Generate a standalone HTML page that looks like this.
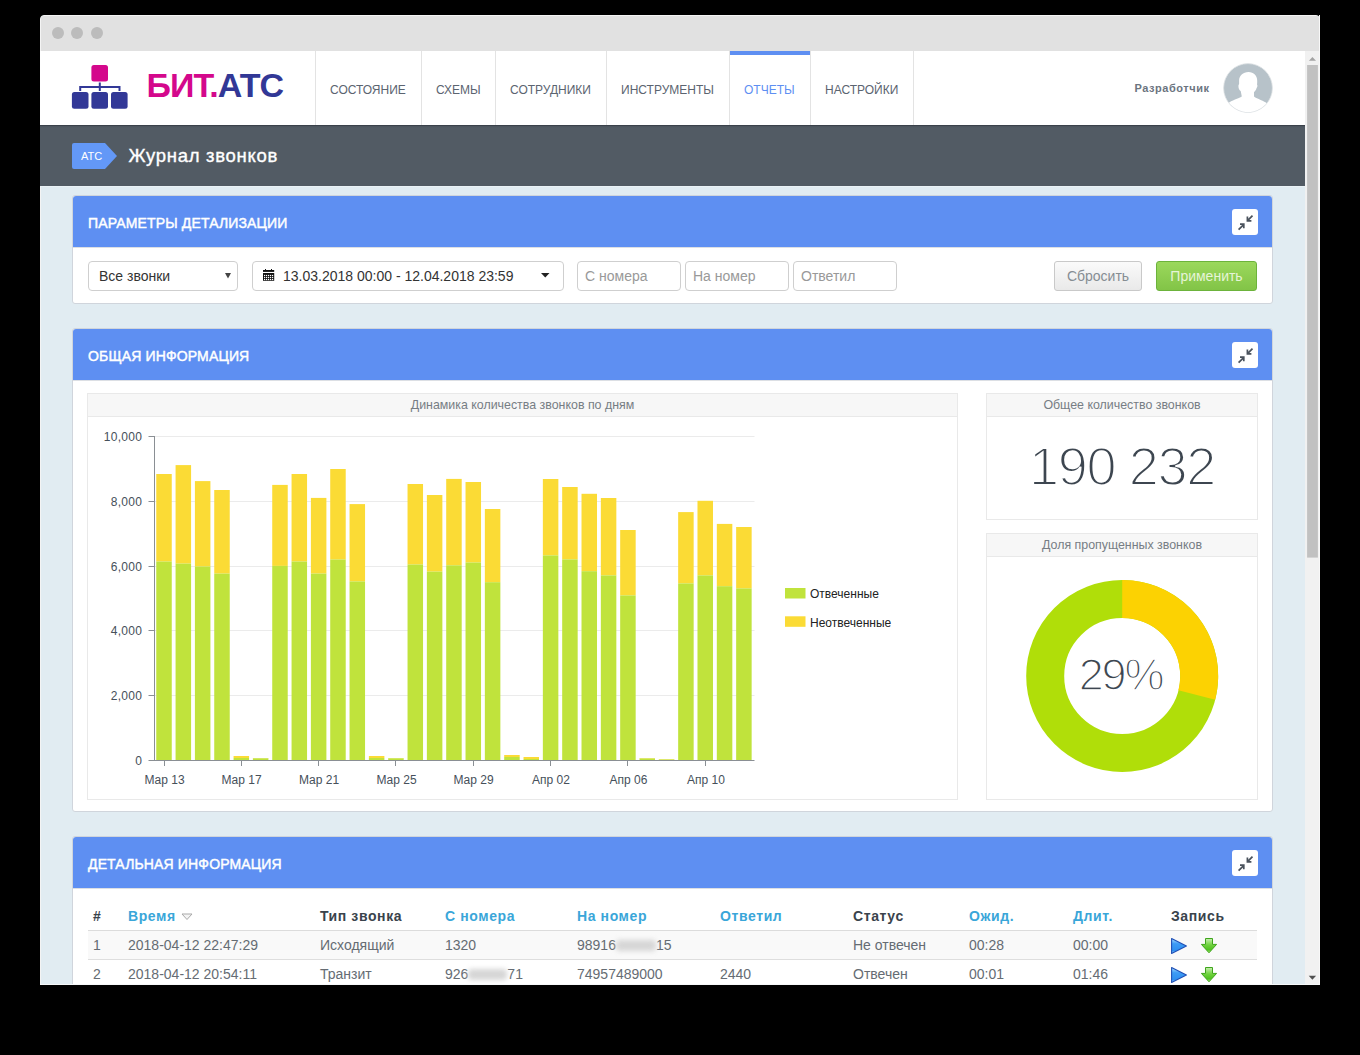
<!DOCTYPE html>
<html><head><meta charset="utf-8">
<style>
*{box-sizing:border-box;margin:0;padding:0}
html,body{width:1360px;height:1055px;overflow:hidden;background:#000;font-family:"Liberation Sans",sans-serif}
.abs{position:absolute}
#win{position:absolute;left:40px;top:15px;width:1280px;height:970px;background:#e1ecf2;border-radius:4px 4px 0 0;overflow:hidden;border:1px solid #f4f4f4}
#titlebar{position:absolute;left:0;top:0;width:1280px;height:36px;background:#e1e1e1}
.dot{position:absolute;top:11px;width:12px;height:12px;border-radius:50%;background:#bcbcbc}
#hdr{position:absolute;left:40px;top:51px;width:1265px;height:74px;background:#fff}
.navsep{position:absolute;top:51px;width:1px;height:74px;background:#e3e3e3}
.nav{position:absolute;top:84px;font-size:12px;color:#5b6470;line-height:12px;white-space:nowrap}
#dark{position:absolute;left:40px;top:125px;width:1265px;height:61px;background:linear-gradient(#3a414a 0,#3a414a 1px,#4b535c 1px,#4f5861 2px,#525b64 3px)}
.panel{position:absolute;left:72px;width:1201px;background:#fff;border:1px solid #d0d5dc;border-radius:3px}
.phead{position:absolute;left:0;top:0;width:1199px;height:52px;background:#5e8ff2;border-radius:3px 3px 0 0;border-bottom:1px solid #dcdfe4}
.ptitle{position:absolute;left:15px;top:20px;color:#fff;font-size:14px;font-weight:normal;-webkit-text-stroke:0.45px #fff;letter-spacing:0.15px;line-height:14px;white-space:nowrap}
.pbtn{position:absolute;left:1159px;top:13px;width:26px;height:26px}
.inp{position:absolute;height:30px;border:1px solid #cfcfcf;border-radius:4px;background:#fff;font-size:14px;color:#999;line-height:28px;padding-left:7px;white-space:nowrap}
.box{position:absolute;background:#fff;border:1px solid #e9e9e9}
.bhead{position:absolute;left:0;top:0;width:100%;height:23px;background:#f7f7f7;border-bottom:1px solid #e9e9e9;text-align:center;font-size:12.4px;color:#767d84;line-height:22px}
.th{position:absolute;top:908px;font-size:14px;font-weight:bold;letter-spacing:0.6px;color:#3a434c;line-height:16px;white-space:nowrap}
.th.b{color:#3aa6d9}
.td{position:absolute;font-size:14px;color:#656c73;line-height:16px;white-space:nowrap}
.blur{display:inline-block;height:11px;vertical-align:-1px;background:#d6d6d6;filter:blur(2.5px);border-radius:4px}
#sb{position:absolute;left:1305px;top:51px;width:14px;height:934px;background:#f1f1f1}
</style></head><body>
<div id="win">
  <div id="titlebar"></div>
  <div class="dot" style="left:11px"></div>
  <div class="dot" style="left:30px"></div>
  <div class="dot" style="left:50px"></div>
</div>
<div id="hdr"></div>
<div class="navsep" style="left:315px"></div>
<div class="navsep" style="left:421px"></div>
<div class="navsep" style="left:495px"></div>
<div class="navsep" style="left:606px"></div>
<div class="navsep" style="left:729px"></div>
<div class="navsep" style="left:810px"></div>
<div class="navsep" style="left:913px"></div>
<div class="abs" style="left:730px;top:51px;width:80px;height:4px;background:#5e8ff2"></div>
<div class="nav" style="left:330px">СОСТОЯНИЕ</div>
<div class="nav" style="left:436px">СХЕМЫ</div>
<div class="nav" style="left:510px">СОТРУДНИКИ</div>
<div class="nav" style="left:621px">ИНСТРУМЕНТЫ</div>
<div class="nav" style="left:744px;color:#5e8ff2">ОТЧЕТЫ</div>
<div class="nav" style="left:825px">НАСТРОЙКИ</div>

<!-- logo -->
<svg class="abs" style="left:0;top:0" width="300" height="125" viewBox="0 0 300 125">
  <rect x="91.4" y="65" width="16.6" height="16.6" rx="2.5" fill="#d4088c"/>
  <rect x="71.9" y="92.1" width="16.6" height="16.6" rx="2.5" fill="#323897"/>
  <rect x="91.4" y="92.1" width="16.6" height="16.6" rx="2.5" fill="#323897"/>
  <rect x="111" y="92.1" width="16.6" height="16.6" rx="2.5" fill="#323897"/>
  <path d="M99.8 82.6V91 M80.2 91V87 H119.5 V91" stroke="#323897" stroke-width="2" fill="none"/>
  <text x="146.5" y="97.2" font-family="Liberation Sans" font-weight="bold" font-size="34" letter-spacing="-1" fill="#d4088c">БИТ.<tspan fill="#323896">АТС</tspan></text>
</svg>
<div class="abs" style="left:1134.5px;top:83px;font-size:11px;font-weight:bold;letter-spacing:0.55px;color:#6b7480;line-height:11px">Разработчик</div>
<svg class="abs" style="left:1222px;top:62px" width="52" height="52" viewBox="0 0 52 52">
  <defs><clipPath id="cav"><circle cx="26" cy="26" r="24.2"/></clipPath></defs>
  <circle cx="26" cy="26" r="24.4" fill="#b7c2c9" stroke="#dfe3e6" stroke-width="0.8"/>
  <g clip-path="url(#cav)" fill="#fff">
    <path d="M26.5 9.9C21 9.9 17.1 13.5 17.1 18.5V22.2C16.2 22.6 16.2 25.5 17.2 27.4C17.6 28.3 18.2 28.8 18.7 29L19.8 34.6C17 36.6 9 38.6 6.3 41.2L-2 54H54L45.2 41.6C42.4 39 35 37 32 34.6V30C33 29.4 34 28 34.6 26C35.6 25.2 35.6 23 35 22.4C35.3 21 35.2 19.5 35.2 18.5C35.2 13.5 31.8 9.9 26.5 9.9Z"/>
  </g>
</svg>

<div id="dark"></div>
<div class="abs" style="left:40px;top:186px;width:1265px;height:1px;background:#eaf2f6"></div>
<svg class="abs" style="left:72px;top:143px" width="46" height="26" viewBox="0 0 46 26">
  <path d="M2 0H33L45 13L33 26H2A2 2 0 0 1 0 24V2A2 2 0 0 1 2 0Z" fill="#6398f7"/>
  <text x="9" y="17" font-family="Liberation Sans" font-size="11" fill="#fff">ATC</text>
</svg>
<div class="abs" style="left:128.5px;top:147px;font-size:18.5px;letter-spacing:0.7px;-webkit-text-stroke:0.35px #fff;color:#fff;line-height:18px;white-space:nowrap">Журнал звонков</div>

<!-- panel 1 -->
<div class="panel" style="top:195px;height:109px">
  <div class="phead"></div>
  <div class="ptitle">ПАРАМЕТРЫ ДЕТАЛИЗАЦИИ</div>
  <svg class="pbtn" width="26" height="26" viewBox="0 0 26 26"><rect width="26" height="26" rx="3" fill="#fff"/><g stroke="#4a525c" stroke-width="1.7" fill="none"><path d="M20.5 6.6L15.8 11.4M15.4 7.6V11.8H19.4"/><path d="M6.6 20.6L11.4 15.8M8 15.2H11.8V19.2"/></g></svg>
</div>
<div class="inp" style="left:88px;top:261px;width:150px;color:#333;padding-left:10px">Все звонки</div>
<div class="inp" style="left:252px;top:261px;width:312px;color:#333;padding-left:30px">13.03.2018 00:00 - 12.04.2018 23:59</div>
<svg class="abs" style="left:225px;top:273px" width="6" height="6" viewBox="0 0 6 6"><path d="M0 0H6L3 5.6Z" fill="#444"/></svg>
<svg class="abs" style="left:263px;top:269px" width="12" height="12" viewBox="0 0 12 12">
<rect x="0" y="1" width="11.2" height="1.9" fill="#111"/><rect x="2" y="0" width="1" height="2" fill="#111"/><rect x="8" y="0" width="1" height="2" fill="#111"/>
<rect x="0" y="4" width="11.2" height="7.8" fill="#111"/>
<g fill="#fff"><rect x="1" y="5.9" width="1.2" height="1.2"/><rect x="3" y="5.9" width="1.2" height="1.2"/><rect x="5" y="5.9" width="1.2" height="1.2"/><rect x="7" y="5.9" width="1.2" height="1.2"/><rect x="9" y="5.9" width="1.2" height="1.2"/>
<rect x="1" y="7.9" width="1.2" height="1.2"/><rect x="3" y="7.9" width="1.2" height="1.2"/><rect x="5" y="7.9" width="1.2" height="1.2"/><rect x="7" y="7.9" width="1.2" height="1.2"/><rect x="9" y="7.9" width="1.2" height="1.2"/>
<rect x="1" y="9.9" width="1.2" height="1.2"/><rect x="3" y="9.9" width="1.2" height="1.2"/><rect x="5" y="9.9" width="1.2" height="1.2"/><rect x="7" y="9.9" width="1.2" height="1.2"/><rect x="9" y="9.9" width="1.2" height="1.2"/></g></svg>
<svg class="abs" style="left:541px;top:273px" width="9" height="5" viewBox="0 0 9 5"><path d="M0 0H8.5L4.25 4.5Z" fill="#222"/></svg>
<div class="inp" style="left:577px;top:261px;width:104px">С номера</div>
<div class="inp" style="left:685px;top:261px;width:104px">На номер</div>
<div class="inp" style="left:793px;top:261px;width:104px">Ответил</div>
<div class="abs" style="left:1054px;top:261px;width:88px;height:30px;border:1px solid #c9c9c9;border-radius:3px;background:linear-gradient(#fafafa,#e9e9e9);font-size:14px;color:#868d93;text-align:center;line-height:28px">Сбросить</div>
<div class="abs" style="left:1156px;top:261px;width:101px;height:30px;border:1px solid #6cb33b;border-radius:3px;background:linear-gradient(#9bd85c,#82c447);font-size:14px;color:#e6f4d8;text-align:center;line-height:28px">Применить</div>

<!-- panel 2 -->
<div class="panel" style="top:328px;height:484px">
  <div class="phead"></div>
  <div class="ptitle">ОБЩАЯ ИНФОРМАЦИЯ</div>
  <svg class="pbtn" width="26" height="26" viewBox="0 0 26 26"><rect width="26" height="26" rx="3" fill="#fff"/><g stroke="#4a525c" stroke-width="1.7" fill="none"><path d="M20.5 6.6L15.8 11.4M15.4 7.6V11.8H19.4"/><path d="M6.6 20.6L11.4 15.8M8 15.2H11.8V19.2"/></g></svg>
</div>
<div class="box" style="left:87px;top:393px;width:871px;height:407px"><div class="bhead">Динамика количества звонков по дням</div></div>
<div class="box" style="left:986px;top:393px;width:272px;height:127px"><div class="bhead">Общее количество звонков</div></div>
<div class="abs" style="left:986px;top:440px;width:272px;text-align:center;font-size:54px;letter-spacing:-1.3px;color:#3d4650;-webkit-text-stroke:2px #fff;line-height:52px">190 232</div>
<div class="box" style="left:986px;top:533px;width:272px;height:267px"><div class="bhead">Доля пропущенных звонков</div></div>

<svg class="abs" style="left:0;top:0" width="1360" height="1055" viewBox="0 0 1360 1055">
  <g stroke="#ebebeb" stroke-width="1">
    <line x1="154.5" y1="436.5" x2="754.5" y2="436.5"/>
    <line x1="154.5" y1="501.5" x2="754.5" y2="501.5"/>
    <line x1="154.5" y1="566.5" x2="754.5" y2="566.5"/>
    <line x1="154.5" y1="630.5" x2="754.5" y2="630.5"/>
    <line x1="154.5" y1="695.5" x2="754.5" y2="695.5"/>
  </g>
<rect x="156.25" y="474.0" width="15.50" height="87.5" fill="#fbdb35"/>
<rect x="156.25" y="561.5" width="15.50" height="199.0" fill="#c0e33c"/>
<rect x="175.58" y="465.1" width="15.50" height="98.5" fill="#fbdb35"/>
<rect x="175.58" y="563.6" width="15.50" height="196.9" fill="#c0e33c"/>
<rect x="194.91" y="481.1" width="15.50" height="85.4" fill="#fbdb35"/>
<rect x="194.91" y="566.5" width="15.50" height="194.0" fill="#c0e33c"/>
<rect x="214.24" y="490.0" width="15.50" height="83.6" fill="#fbdb35"/>
<rect x="214.24" y="573.6" width="15.50" height="186.9" fill="#c0e33c"/>
<rect x="233.57" y="756.0" width="15.50" height="2.0" fill="#fbdb35"/>
<rect x="233.57" y="758.0" width="15.50" height="2.5" fill="#c0e33c"/>
<rect x="252.90" y="758.0" width="15.50" height="0.3" fill="#fbdb35"/>
<rect x="252.90" y="758.3" width="15.50" height="2.2" fill="#c0e33c"/>
<rect x="272.23" y="484.9" width="15.50" height="81.0" fill="#fbdb35"/>
<rect x="272.23" y="565.9" width="15.50" height="194.6" fill="#c0e33c"/>
<rect x="291.56" y="474.0" width="15.50" height="87.5" fill="#fbdb35"/>
<rect x="291.56" y="561.5" width="15.50" height="199.0" fill="#c0e33c"/>
<rect x="310.89" y="497.9" width="15.50" height="75.7" fill="#fbdb35"/>
<rect x="310.89" y="573.6" width="15.50" height="186.9" fill="#c0e33c"/>
<rect x="330.22" y="469.0" width="15.50" height="90.5" fill="#fbdb35"/>
<rect x="330.22" y="559.5" width="15.50" height="201.0" fill="#c0e33c"/>
<rect x="349.55" y="504.1" width="15.50" height="77.3" fill="#fbdb35"/>
<rect x="349.55" y="581.4" width="15.50" height="179.1" fill="#c0e33c"/>
<rect x="368.88" y="756.0" width="15.50" height="2.0" fill="#fbdb35"/>
<rect x="368.88" y="758.0" width="15.50" height="2.5" fill="#c0e33c"/>
<rect x="388.21" y="758.0" width="15.50" height="0.3" fill="#fbdb35"/>
<rect x="388.21" y="758.3" width="15.50" height="2.2" fill="#c0e33c"/>
<rect x="407.54" y="484.0" width="15.50" height="80.5" fill="#fbdb35"/>
<rect x="407.54" y="564.5" width="15.50" height="196.0" fill="#c0e33c"/>
<rect x="426.87" y="495.0" width="15.50" height="76.6" fill="#fbdb35"/>
<rect x="426.87" y="571.6" width="15.50" height="188.9" fill="#c0e33c"/>
<rect x="446.20" y="478.9" width="15.50" height="86.4" fill="#fbdb35"/>
<rect x="446.20" y="565.3" width="15.50" height="195.2" fill="#c0e33c"/>
<rect x="465.53" y="482.0" width="15.50" height="80.5" fill="#fbdb35"/>
<rect x="465.53" y="562.5" width="15.50" height="198.0" fill="#c0e33c"/>
<rect x="484.86" y="509.0" width="15.50" height="73.2" fill="#fbdb35"/>
<rect x="484.86" y="582.2" width="15.50" height="178.3" fill="#c0e33c"/>
<rect x="504.19" y="755.0" width="15.50" height="2.0" fill="#fbdb35"/>
<rect x="504.19" y="757.0" width="15.50" height="3.5" fill="#c0e33c"/>
<rect x="523.52" y="757.0" width="15.50" height="2.0" fill="#fbdb35"/>
<rect x="523.52" y="759.0" width="15.50" height="1.5" fill="#c0e33c"/>
<rect x="542.85" y="479.0" width="15.50" height="76.4" fill="#fbdb35"/>
<rect x="542.85" y="555.4" width="15.50" height="205.1" fill="#c0e33c"/>
<rect x="562.18" y="487.0" width="15.50" height="72.4" fill="#fbdb35"/>
<rect x="562.18" y="559.4" width="15.50" height="201.1" fill="#c0e33c"/>
<rect x="581.51" y="493.8" width="15.50" height="77.4" fill="#fbdb35"/>
<rect x="581.51" y="571.2" width="15.50" height="189.3" fill="#c0e33c"/>
<rect x="600.84" y="498.0" width="15.50" height="77.4" fill="#fbdb35"/>
<rect x="600.84" y="575.4" width="15.50" height="185.1" fill="#c0e33c"/>
<rect x="620.17" y="530.0" width="15.50" height="65.4" fill="#fbdb35"/>
<rect x="620.17" y="595.4" width="15.50" height="165.1" fill="#c0e33c"/>
<rect x="639.50" y="758.0" width="15.50" height="0.5" fill="#fbdb35"/>
<rect x="639.50" y="758.5" width="15.50" height="2.0" fill="#c0e33c"/>
<rect x="658.83" y="759.0" width="15.50" height="0.5" fill="#fbdb35"/>
<rect x="658.83" y="759.5" width="15.50" height="1.0" fill="#c0e33c"/>
<rect x="678.16" y="512.1" width="15.50" height="71.3" fill="#fbdb35"/>
<rect x="678.16" y="583.4" width="15.50" height="177.1" fill="#c0e33c"/>
<rect x="697.49" y="500.8" width="15.50" height="74.6" fill="#fbdb35"/>
<rect x="697.49" y="575.4" width="15.50" height="185.1" fill="#c0e33c"/>
<rect x="716.82" y="523.9" width="15.50" height="62.3" fill="#fbdb35"/>
<rect x="716.82" y="586.2" width="15.50" height="174.3" fill="#c0e33c"/>
<rect x="736.15" y="527.0" width="15.50" height="61.4" fill="#fbdb35"/>
<rect x="736.15" y="588.4" width="15.50" height="172.1" fill="#c0e33c"/>
  <g stroke="#8a8f94" stroke-width="1">
    <line x1="154.5" y1="436" x2="154.5" y2="760.5"/>
    <line x1="154" y1="760.5" x2="754.5" y2="760.5"/>
    <line x1="148.5" y1="436.5" x2="154.5" y2="436.5"/>
    <line x1="148.5" y1="501.5" x2="154.5" y2="501.5"/>
    <line x1="148.5" y1="566.5" x2="154.5" y2="566.5"/>
    <line x1="148.5" y1="630.5" x2="154.5" y2="630.5"/>
    <line x1="148.5" y1="695.5" x2="154.5" y2="695.5"/>
    <line x1="148.5" y1="760.5" x2="154.5" y2="760.5"/>
    <line x1="164.5" y1="760" x2="164.5" y2="766"/>
    <line x1="241.5" y1="760" x2="241.5" y2="766"/>
    <line x1="318.5" y1="760" x2="318.5" y2="766"/>
    <line x1="395.5" y1="760" x2="395.5" y2="766"/>
    <line x1="473.5" y1="760" x2="473.5" y2="766"/>
    <line x1="550.5" y1="760" x2="550.5" y2="766"/>
    <line x1="627.5" y1="760" x2="627.5" y2="766"/>
    <line x1="705.5" y1="760" x2="705.5" y2="766"/>
  </g>
  <g font-family="Liberation Sans" font-size="12" letter-spacing="0.3" fill="#46505a" text-anchor="end">
    <text x="142.3" y="441">10,000</text>
    <text x="142.3" y="506">8,000</text>
    <text x="142.3" y="571">6,000</text>
    <text x="142.3" y="635">4,000</text>
    <text x="142.3" y="700">2,000</text>
    <text x="142.3" y="765">0</text>
  </g>
  <g font-family="Liberation Sans" font-size="12" fill="#46505a" text-anchor="middle">
    <text x="164.5" y="784">Мар 13</text>
    <text x="241.5" y="784">Мар 17</text>
    <text x="319" y="784">Мар 21</text>
    <text x="396.5" y="784">Мар 25</text>
    <text x="473.5" y="784">Мар 29</text>
    <text x="551" y="784">Апр 02</text>
    <text x="628.5" y="784">Апр 06</text>
    <text x="706" y="784">Апр 10</text>
  </g>
  <rect x="785" y="588" width="20.5" height="10.5" fill="#c0e33c"/>
  <rect x="785" y="616.3" width="20.5" height="10.5" fill="#fbdb35"/>
  <g font-family="Liberation Sans" font-size="12" fill="#222">
    <text x="810" y="598">Отвеченные</text>
    <text x="810" y="626.5">Неотвеченные</text>
  </g>
  <!-- donut -->
  <circle cx="1122.2" cy="675.9" r="77" fill="none" stroke="#b0de09" stroke-width="38"/>
  <path d="M1122.2 579.9A96 96 0 0 1 1215.18 699.78L1178.38 690.32A58 58 0 0 0 1122.2 617.9Z" fill="#fcd202"/>
  <text x="1120.5" y="690" font-family="Liberation Sans" font-size="45" letter-spacing="-2.2" fill="#3d4650" stroke="#fff" stroke-width="1.5" text-anchor="middle">29%</text>
</svg>

<!-- panel 3 -->
<div class="panel" style="top:836px;height:200px">
  <div class="phead"></div>
  <div class="ptitle">ДЕТАЛЬНАЯ ИНФОРМАЦИЯ</div>
  <svg class="pbtn" width="26" height="26" viewBox="0 0 26 26"><rect width="26" height="26" rx="3" fill="#fff"/><g stroke="#4a525c" stroke-width="1.7" fill="none"><path d="M20.5 6.6L15.8 11.4M15.4 7.6V11.8H19.4"/><path d="M6.6 20.6L11.4 15.8M8 15.2H11.8V19.2"/></g></svg>
</div>


<div class="abs" style="left:88px;top:930px;width:1169px;height:1px;background:#dcdcdc"></div>
<div class="abs" style="left:88px;top:931px;width:1169px;height:28px;background:#f9f9f9"></div>
<div class="abs" style="left:88px;top:959px;width:1169px;height:1px;background:#dedede"></div>
<div class="th" style="left:93px">#</div>
<div class="th b" style="left:128px">Время</div>
<svg class="abs" style="left:181px;top:912.5px" width="12" height="8" viewBox="0 0 12 8"><path d="M1 1H11L6 6.5Z" fill="#f4f4f4" stroke="#a9a9a9" stroke-width="1"/></svg>
<div class="th" style="left:320px">Тип звонка</div>
<div class="th b" style="left:445px">С номера</div>
<div class="th b" style="left:577px">На номер</div>
<div class="th b" style="left:720px">Ответил</div>
<div class="th" style="left:853px">Статус</div>
<div class="th b" style="left:969px">Ожид.</div>
<div class="th b" style="left:1073px">Длит.</div>
<div class="th" style="left:1171px">Запись</div>

<div class="td" style="left:93px;top:937px">1</div>
<div class="td" style="left:128px;top:937px">2018-04-12 22:47:29</div>
<div class="td" style="left:320px;top:937px">Исходящий</div>
<div class="td" style="left:445px;top:937px">1320</div>
<div class="td" style="left:577px;top:937px">98916<span class="blur" style="width:40px"></span>15</div>
<div class="td" style="left:853px;top:937px">Не отвечен</div>
<div class="td" style="left:969px;top:937px">00:28</div>
<div class="td" style="left:1073px;top:937px">00:00</div>

<div class="td" style="left:93px;top:966px">2</div>
<div class="td" style="left:128px;top:966px">2018-04-12 20:54:11</div>
<div class="td" style="left:320px;top:966px">Транзит</div>
<div class="td" style="left:445px;top:966px">926<span class="blur" style="width:39px"></span>71</div>
<div class="td" style="left:577px;top:966px">74957489000</div>
<div class="td" style="left:720px;top:966px">2440</div>
<div class="td" style="left:853px;top:966px">Отвечен</div>
<div class="td" style="left:969px;top:966px">00:01</div>
<div class="td" style="left:1073px;top:966px">01:46</div>

<svg class="abs" style="left:1170px;top:937px" width="50" height="18" viewBox="0 0 50 18">
 <defs>
  <linearGradient id="gp" x1="0" y1="0" x2="0" y2="1"><stop offset="0" stop-color="#aee0ff"/><stop offset="0.35" stop-color="#3d9bf5"/><stop offset="0.8" stop-color="#2f8ff0"/><stop offset="1" stop-color="#9fd8ff"/></linearGradient>
  <linearGradient id="gd" x1="0" y1="0" x2="0" y2="1"><stop offset="0" stop-color="#c9efb4"/><stop offset="0.45" stop-color="#6fd33d"/><stop offset="0.8" stop-color="#4fc21f"/><stop offset="1" stop-color="#b6f08a"/></linearGradient>
 </defs>
 <path d="M1.6 1.5L16.4 9L1.6 16.5Z" fill="url(#gp)" stroke="#1f4fb5" stroke-width="1.1" stroke-linejoin="round"/>
 <path d="M35.5 1.5H42.5V7.4H46.6L39 15.8L31.4 7.4H35.5Z" fill="url(#gd)" stroke="#3fa51c" stroke-width="1" stroke-linejoin="round"/>
</svg>
<svg class="abs" style="left:1170px;top:966px" width="50" height="18" viewBox="0 0 50 18">
 <path d="M1.6 1.5L16.4 9L1.6 16.5Z" fill="url(#gp)" stroke="#1f4fb5" stroke-width="1.1" stroke-linejoin="round"/>
 <path d="M35.5 1.5H42.5V7.4H46.6L39 15.8L31.4 7.4H35.5Z" fill="url(#gd)" stroke="#3fa51c" stroke-width="1" stroke-linejoin="round"/>
</svg>
<div id="sb"></div>
<svg class="abs" style="left:1305px;top:51px" width="14" height="934" viewBox="0 0 14 934">
  <path d="M3.9 9.8H11L7.45 5.9Z" fill="#a3a3a3"/>
  <rect x="2.1" y="14" width="10.8" height="492.6" fill="#c1c1c1"/>
  <path d="M3.7 924.8H11.1L7.4 928.8Z" fill="#505050"/>
</svg>
<div class="abs" style="left:0;top:985px;width:1360px;height:70px;background:#000"></div>
<div class="abs" style="left:40px;top:984px;width:1280px;height:1px;background:#f6f8f9"></div>
<div class="abs" style="left:1319px;top:15px;width:1px;height:970px;background:#f8f8f8"></div>
</body></html>
